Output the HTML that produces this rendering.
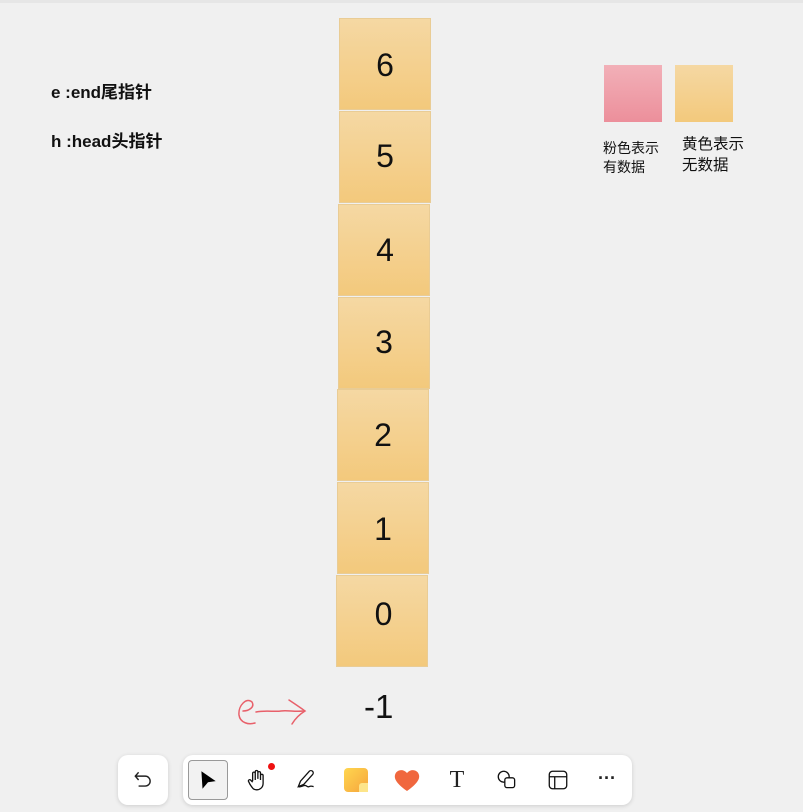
<!DOCTYPE html>
<html><head><meta charset="utf-8"><style>
body{margin:0;width:803px;height:812px;background:#f0f0f0;position:relative;overflow:hidden;font-family:"Liberation Sans","Noto Sans CJK SC",sans-serif}
.n{position:absolute;width:92px;height:92px;background:linear-gradient(#f5d8a3,#f3c97c);border:1px solid #e9cc95;box-sizing:border-box;display:flex;align-items:center;justify-content:center;font-size:32px;color:#111}
.t{position:absolute;font-weight:bold;font-size:17px;color:#111}
.k{position:absolute;font-size:14px;line-height:19px;color:#111}
.bar{position:absolute;background:#fff;border-radius:10px;box-shadow:0 1px 4px rgba(0,0,0,.15)}
.ic{position:absolute;top:0;width:40px;height:40px;display:flex;align-items:center;justify-content:center}
</style></head><body>
<div style="position:absolute;top:0;left:0;width:803px;height:3px;background:#e6e6e6"></div>
<div class="t" style="left:51px;top:78px">e :end尾指针</div>
<div class="t" style="left:51px;top:127px">h :head头指针</div>
<div class="n" style="left:339px;top:18px;padding-top:2px">6</div>
<div class="n" style="left:339px;top:111px;padding-bottom:2px">5</div>
<div class="n" style="left:338px;top:204px;padding-left:2px">4</div>
<div class="n" style="left:338px;top:297px;padding-bottom:2px">3</div>
<div class="n" style="left:337px;top:389px;padding-top:académie0">2</div>
<div class="n" style="left:337px;top:482px;padding-top:2px">1</div>
<div class="n" style="left:336px;top:575px;padding-bottom:14px;padding-left:3px">0</div>
<div style="position:absolute;left:364px;top:688px;font-size:33px;color:#111">-1</div>
<svg style="position:absolute;left:235px;top:695px" width="75" height="35" viewBox="0 0 75 35" fill="none" stroke="#e8606a" stroke-width="1.5" stroke-linecap="round"><path d="M8 16 C14 16 20 12 17 7 C12 2 3 10 4 20 C5 28 14 30 20 28"/><path d="M21 17 C30 15 40 17 46 16 C52 15 60 17 68 16"/><path d="M54 5 C60 9 66 13 70 16 C65 19 60 24 57 29"/></svg>
<div style="position:absolute;left:604px;top:65px;width:58px;height:57px;background:linear-gradient(#f2b0b8,#ec8f9b)"></div>
<div style="position:absolute;left:675px;top:65px;width:58px;height:57px;background:linear-gradient(#f5d8a3,#f3c97c)"></div>
<div class="k" style="left:603px;top:139px">粉色表示<br>有数据</div>
<div class="k" style="left:682px;top:134px;font-size:15.5px;line-height:21px">黄色表示<br>无数据</div>
<div class="bar" style="left:118px;top:755px;width:50px;height:50px"><svg style="position:absolute;left:14px;top:14px" width="22" height="22" viewBox="0 0 20 20" fill="none" stroke="#222" stroke-width="1.3"><path d="M6 3 L3 6.5 L6 10"/><path d="M3 6.5 H12 A4.5 4.5 0 0 1 12 15.5 H6"/></svg></div>
<div class="bar" style="left:183px;top:755px;width:449px;height:50px">
<div class="ic" style="left:5px;top:5px;width:38px;height:38px;border:1px solid #999;border-radius:4px;background:#f2f2f2"><svg width="22" height="22" viewBox="0 0 20 20"><path d="M4 2 L17 11 L10 12 L5 18 Z" fill="#000"/></svg></div>
<div class="ic" style="left:54px;top:5px"><svg width="24" height="24" viewBox="0 0 22 22" fill="none" stroke="#111" stroke-width="1.2"><path d="M7 12 V5 a1.2 1.2 0 0 1 2.4 0 V11 M9.4 10 V3.5 a1.2 1.2 0 0 1 2.4 0 V10 M11.8 10 V4.5 a1.2 1.2 0 0 1 2.4 0 V11 M14.2 11 V7 a1.2 1.2 0 0 1 2.4 0 V14 c0 4 -3 6 -6 6 c-3 0 -4 -2 -6 -5 l-1.5 -3 a1.2 1.2 0 0 1 2 -1 L7 13"/></svg></div>
<div style="position:absolute;left:85px;top:8px;width:7px;height:7px;border-radius:50%;background:#e11"></div>
<div class="ic" style="left:103px;top:5px"><svg width="24" height="24" viewBox="0 0 22 22" fill="none" stroke="#111" stroke-width="1.2"><path d="M4 17 L6 12 L14 3 a2 2 0 0 1 3 3 L9 15 Z"/><path d="M4 17 c2 1 4 -1 6 -1 c2 0 2 2 4 1 c2 -1 3 0 4 0"/></svg></div>
<div class="ic" style="left:153px;top:5px"><div style="width:24px;height:24px;border-radius:4px;background:linear-gradient(135deg,#ffd64f,#f6a53d);position:relative"><div style="position:absolute;right:0;bottom:0;width:9px;height:9px;background:#fde58a;border-top-left-radius:3px"></div></div></div>
<div class="ic" style="left:204px;top:5px"><svg width="28" height="26" viewBox="0 0 28 26"><path d="M14 24 C4 17 1 12 2 8 C3 3 10 1 14 6 C18 1 25 3 26 8 C27 12 24 17 14 24 Z" fill="#f0673e"/></svg></div>
<div class="ic" style="left:254px;top:5px;font-family:'Liberation Serif',serif;font-size:24px;color:#222">T</div>
<div class="ic" style="left:304px;top:5px"><svg width="24" height="24" viewBox="0 0 22 22" fill="none" stroke="#111" stroke-width="1.2"><circle cx="8" cy="8" r="5"/><rect x="9" y="9" width="9" height="9" rx="2" fill="#fff"/></svg></div>
<div class="ic" style="left:355px;top:5px"><svg width="24" height="24" viewBox="0 0 22 22" fill="none" stroke="#111" stroke-width="1.2"><rect x="3" y="3" width="16" height="16" rx="3"/><path d="M3 8 H19 M8 8 V19"/></svg></div>
<div class="ic" style="left:404px;top:3px;font-size:18px;font-weight:bold;color:#222">···</div>
</div>
</body></html>
